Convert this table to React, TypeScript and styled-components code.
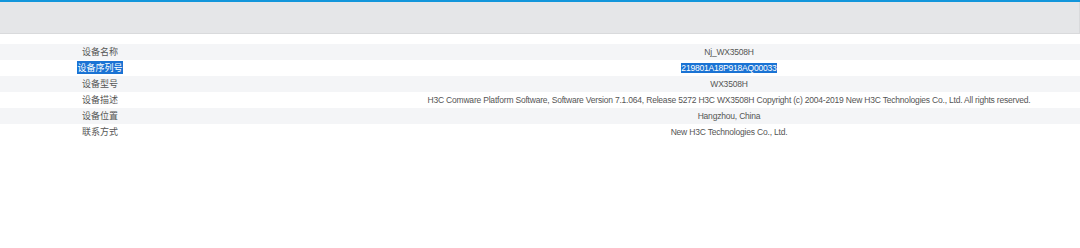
import React from 'react';
import styled, { createGlobalStyle } from 'styled-components';

const GlobalStyle = createGlobalStyle`
  html, body {
    margin: 0;
    padding: 0;
    background: #ffffff;
  }
  body {
    font-family: "Liberation Sans", "Noto Sans CJK SC", sans-serif;
  }
`;

const Page = styled.div`
  width: 1080px;
  height: 248px;
  background: #ffffff;
  display: flex;
  flex-direction: column;
  overflow: hidden;
`;

const TopBar = styled.div`
  height: 2px;
  background: #1296db;
`;

const Header = styled.div`
  height: 31px;
  background: #e5e6e8;
  border-bottom: 1px solid #d9dadc;
  border-right: 1px solid #d9dadc;
`;

const Table = styled.div`
  margin-top: 10px;
  display: flex;
  flex-direction: column;
`;

const Row = styled.div<{ $striped: boolean }>`
  display: grid;
  grid-template-columns: 200px 1fr;
  height: 16px;
  align-items: center;
  background: ${({ $striped }) => ($striped ? '#f4f5f7' : '#ffffff')};
`;

const Label = styled.div`
  text-align: center;
  font-family: "Noto Sans CJK SC", "Liberation Sans", sans-serif;
  font-size: 9px;
  line-height: 12px;
  color: #555555;
`;

const Value = styled.div`
  padding-left: 178px;
  text-align: center;
  font-family: "Liberation Sans", "Noto Sans CJK SC", sans-serif;
  font-size: 8.5px;
  letter-spacing: -0.2px;
  line-height: 12px;
  color: #555555;
  white-space: nowrap;
`;

const Selected = styled.span`
  background: #1a73d4;
  color: #ffffff;
`;

type Field = {
  label: string;
  value: string;
  selected?: boolean;
};

const fields: Field[] = [
  { label: '设备名称', value: 'Nj_WX3508H' },
  { label: '设备序列号', value: '219801A18P918AQ00033', selected: true },
  { label: '设备型号', value: 'WX3508H' },
  {
    label: '设备描述',
    value:
      'H3C Comware Platform Software, Software Version 7.1.064, Release 5272 H3C WX3508H Copyright (c) 2004-2019 New H3C Technologies Co., Ltd. All rights reserved.',
  },
  { label: '设备位置', value: 'Hangzhou, China' },
  { label: '联系方式', value: 'New H3C Technologies Co., Ltd.' },
];

export default function App(): React.JSX.Element {
  return (
    <>
      <GlobalStyle />
      <Page>
        <TopBar />
        <Header />
        <Table>
          {fields.map((f, i) => (
            <Row key={f.label} $striped={i % 2 === 0}>
              <Label>{f.selected ? <Selected>{f.label}</Selected> : f.label}</Label>
              <Value>{f.selected ? <Selected>{f.value}</Selected> : f.value}</Value>
            </Row>
          ))}
        </Table>
      </Page>
    </>
  );
}
